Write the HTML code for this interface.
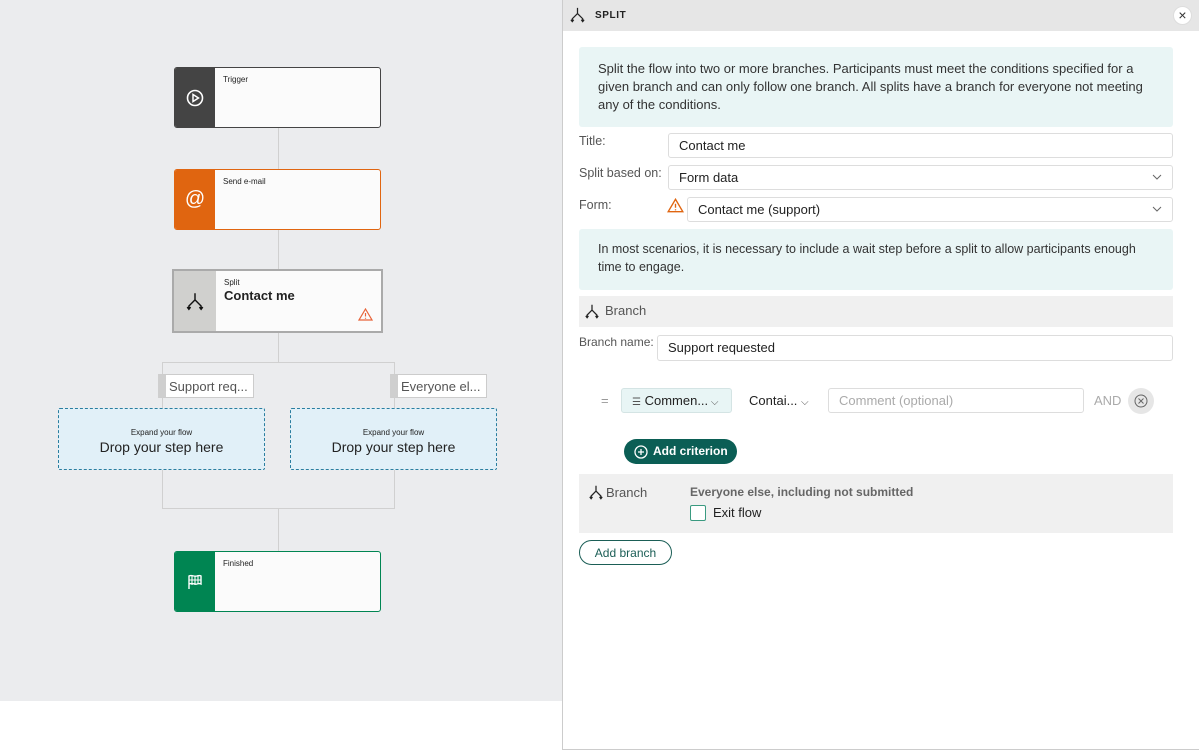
<!DOCTYPE html>
<html><head><style>
*{box-sizing:border-box;margin:0;padding:0}
body{width:1199px;height:750px;position:relative;font-family:"Liberation Sans",sans-serif;background:#fff;overflow:hidden;color:#222}
.a{position:absolute}
.canvas{left:0;top:0;width:563px;height:701px;background:#ebecee}
.node{position:absolute;background:#fbfbfb;border-radius:3px;display:flex;overflow:hidden}
.node .ic{width:40px;display:flex;align-items:center;justify-content:center}
.node .t{font-size:8px;padding:7px 0 0 8px}
.ln{position:absolute;background:#d0d0d0}
.drop{position:absolute;border:1px dashed #2a7ea0;background:#e1f0f8;text-align:center;border-radius:2px}
.drop .s{font-size:8px;margin-top:19px}
.drop .b{font-size:14px;margin-top:2px}
.tab{position:absolute;height:24px;border:1px solid #ccc;background:#fff;font-size:13px;color:#555;padding:4px 0 0 3px;border-left:8px solid #cfcfcf;white-space:nowrap;overflow:hidden}
.lbl{position:absolute;font-size:12.5px;color:#555}
.inp{position:absolute;border:1px solid #ddd;border-radius:3px;background:#fff;font-size:13px;padding:4px 10px;color:#222}
.chev{position:absolute;right:10px;top:6px}
.info{position:absolute;background:#e9f5f5;border-radius:3px;font-size:13px;line-height:18px;color:#333}
</style></head><body>
<div class="a canvas"></div>
<div class="ln" style="left:278px;top:127px;width:1px;height:236px"></div>
<div class="ln" style="left:278px;top:508px;width:1px;height:44px"></div>
<div class="ln" style="left:162px;top:362px;width:233px;height:1px"></div>
<div class="ln" style="left:162px;top:362px;width:1px;height:147px"></div>
<div class="ln" style="left:394px;top:362px;width:1px;height:147px"></div>
<div class="ln" style="left:162px;top:508px;width:233px;height:1px"></div>

<div class="node" style="left:174px;top:67px;width:207px;height:61px;border:1px solid #444">
<div class="ic" style="background:#444"><svg width="18" height="18" viewBox="0 0 18 18"><circle cx="9" cy="9" r="7.5" fill="none" stroke="#fff" stroke-width="1.6"/><path d="M7 5.5v7l5.5-3.5z" fill="none" stroke="#fff" stroke-width="1.5"/></svg></div><div class="t">Trigger</div></div>
<div class="node" style="left:174px;top:169px;width:207px;height:61px;border:1px solid #e06510">
<div class="ic" style="background:#e06510;color:#fff;font-size:20px">@</div><div class="t">Send e-mail</div></div>
<div class="node" style="left:172px;top:269px;width:211px;height:64px;border:2px solid #aaa;border-radius:0">
<div class="ic" style="background:#d0d0ce;width:42px"><svg width="20" height="20" viewBox="0 0 18 18"><path d="M9 2v6M9 8L3.5 13.5v3M9 8l5.5 5.5v3M2 14.5l1.5 2 1.5-2M13 14.5l1.5 2 1.5-2" fill="none" stroke="#111" stroke-width="1.3"/></svg></div>
<div style="padding:7px 0 0 8px;flex:1;position:relative"><div style="font-size:8px">Split</div><div style="font-size:13px;font-weight:bold;margin-top:1px">Contact me</div>
<svg style="position:absolute;right:8px;bottom:10px" width="15" height="13" viewBox="0 0 15 13"><path d="M7.5 1L14 12H1z" fill="none" stroke="#e8643a" stroke-width="1.2"/><path d="M7.5 5v3.5M7.5 9.8v1" stroke="#e8643a" stroke-width="1.2"/></svg></div></div>

<div class="tab" style="left:158px;top:374px;width:96px">Support req...</div>
<div class="tab" style="left:390px;top:374px;width:97px">Everyone el...</div>
<div class="drop" style="left:58px;top:408px;width:207px;height:62px"><div class="s">Expand your flow</div><div class="b">Drop your step here</div></div>
<div class="drop" style="left:290px;top:408px;width:207px;height:62px"><div class="s">Expand your flow</div><div class="b">Drop your step here</div></div>

<div class="node" style="left:174px;top:551px;width:207px;height:61px;border:1px solid #008552">
<div class="ic" style="background:#008552"><svg width="18" height="16" viewBox="0 0 18 16"><path d="M3 15V2c3-1.5 5 1 8 0s3-.5 4 0v8c-1-.5-2-.8-4 0s-5-1.5-8 0" fill="none" stroke="#fff" stroke-width="1.4"/><path d="M6 2v9M9 2v9M12 1v9M3 6h12" stroke="#fff" stroke-width="1.1"/></svg></div><div class="t">Finished</div></div>

<!-- right panel -->
<div class="a" style="left:562px;top:0;width:637px;height:750px;border-left:1px solid #ccc;border-bottom:1px solid #ccc;background:#fff"></div>
<div class="a" style="left:563px;top:0;width:636px;height:31px;background:#e6e6e6"></div>
<svg class="a" style="left:569px;top:6px" width="17" height="17" viewBox="0 0 18 18"><path d="M9 2v6M9 8L3.5 13.5v3M9 8l5.5 5.5v3M2 14.5l1.5 2 1.5-2M13 14.5l1.5 2 1.5-2" fill="none" stroke="#222" stroke-width="1.3"/></svg>
<div class="a" style="left:595px;top:10px;font-size:10px;font-weight:bold;letter-spacing:.6px">SPLIT</div>
<div class="a" style="left:1173px;top:6px;width:19px;height:19px;border-radius:50%;background:#fff;border:1px solid #ddd;font-size:14px;text-align:center;line-height:16px;color:#333">×</div>

<div class="info" style="left:579px;top:47px;width:594px;height:80px;padding:13px 19px">Split the flow into two or more branches. Participants must meet the conditions specified for a given branch and can only follow one branch. All splits have a branch for everyone not meeting any of the conditions.</div>
<div class="lbl" style="left:579px;top:134px">Title:</div>
<div class="inp" style="left:668px;top:133px;width:505px;height:25px">Contact me</div>
<div class="lbl" style="left:579px;top:166px">Split based on:</div>
<div class="inp" style="left:668px;top:165px;width:505px;height:25px">Form data<svg class="chev" width="10" height="10"><path d="M1 3l4 4 4-4" fill="none" stroke="#666"/></svg></div>
<div class="lbl" style="left:579px;top:198px">Form:</div>
<svg class="a" style="left:667px;top:198px" width="17" height="15" viewBox="0 0 15 13"><path d="M7.5 1L14 12H1z" fill="none" stroke="#e06510" stroke-width="1.2"/><path d="M7.5 5v3.5M7.5 9.8v1" stroke="#e06510" stroke-width="1.2"/></svg>
<div class="inp" style="left:687px;top:197px;width:486px;height:25px">Contact me (support)<svg class="chev" width="10" height="10"><path d="M1 3l4 4 4-4" fill="none" stroke="#666"/></svg></div>
<div class="info" style="left:579px;top:229px;width:594px;height:61px;padding:11px 19px;font-size:12.5px">In most scenarios, it is necessary to include a wait step before a split to allow participants enough time to engage.</div>
<div class="a" style="left:579px;top:296px;width:594px;height:31px;background:#f0f0f0;font-size:13px;color:#555;padding:7px 0 0 26px">Branch</div>
<svg class="a" style="left:584px;top:303px" width="16" height="16" viewBox="0 0 18 18"><path d="M9 2v6M9 8L3.5 13.5v3M9 8l5.5 5.5v3M2 14.5l1.5 2 1.5-2M13 14.5l1.5 2 1.5-2" fill="none" stroke="#222" stroke-width="1.4"/></svg>
<div class="lbl" style="left:579px;top:335px;font-size:12px">Branch name:</div>
<div class="inp" style="left:657px;top:335px;width:516px;height:26px">Support requested</div>

<div class="a" style="left:601px;top:393px;font-size:13px;color:#999">=</div>
<div class="a" style="left:621px;top:388px;width:111px;height:25px;background:#e8f5f5;border:1px solid #d4e4e4;border-radius:3px;font-size:13px;padding:4px 0 0 10px;white-space:nowrap"><span style="font-size:10px;color:#555">☰</span> Commen...<span style="font-size:10px;color:#555"> ⌵</span></div>
<div class="a" style="left:749px;top:393px;font-size:13px">Contai... <span style="font-size:10px;color:#555">⌵</span></div>
<div class="inp" style="left:828px;top:388px;width:256px;height:25px;color:#aaa">Comment (optional)</div>
<div class="a" style="left:1094px;top:393px;font-size:13px;color:#aaa">AND</div>
<div class="a" style="left:1128px;top:388px;width:26px;height:26px;border-radius:50%;background:#e6e6e6"></div>
<svg class="a" style="left:1134px;top:394px" width="14" height="14"><circle cx="7" cy="7" r="6" fill="none" stroke="#666"/><path d="M4.5 4.5l5 5M9.5 4.5l-5 5" stroke="#666"/></svg>
<div class="a" style="left:624px;top:439px;width:113px;height:25px;background:#0b5e55;border-radius:13px;color:#fff;font-size:12px;font-weight:bold;padding:5px 0 0 29px">Add criterion</div>
<svg class="a" style="left:634px;top:445px" width="14" height="14"><circle cx="7" cy="7" r="6" fill="none" stroke="#fff" stroke-width="1.3"/><path d="M7 4v6M4 7h6" stroke="#fff" stroke-width="1.3"/></svg>

<div class="a" style="left:579px;top:474px;width:594px;height:59px;background:#f0f0f0"></div>
<svg class="a" style="left:588px;top:484px" width="16" height="16" viewBox="0 0 18 18"><path d="M9 2v6M9 8L3.5 13.5v3M9 8l5.5 5.5v3M2 14.5l1.5 2 1.5-2M13 14.5l1.5 2 1.5-2" fill="none" stroke="#222" stroke-width="1.4"/></svg>
<div class="a" style="left:606px;top:485px;font-size:13px;color:#555">Branch</div>
<div class="a" style="left:690px;top:485px;font-size:12px;font-weight:bold;color:#666">Everyone else, including not submitted</div>
<div class="a" style="left:690px;top:505px;width:16px;height:16px;border:1px solid #3a9a80;border-radius:2px;background:#fff"></div>
<div class="a" style="left:713px;top:505px;font-size:13px">Exit flow</div>
<div class="a" style="left:579px;top:540px;width:93px;height:25px;border:1px solid #1b5e56;border-radius:13px;font-size:12px;color:#1b5e56;text-align:center;padding-top:5px">Add branch</div>
</body></html>
